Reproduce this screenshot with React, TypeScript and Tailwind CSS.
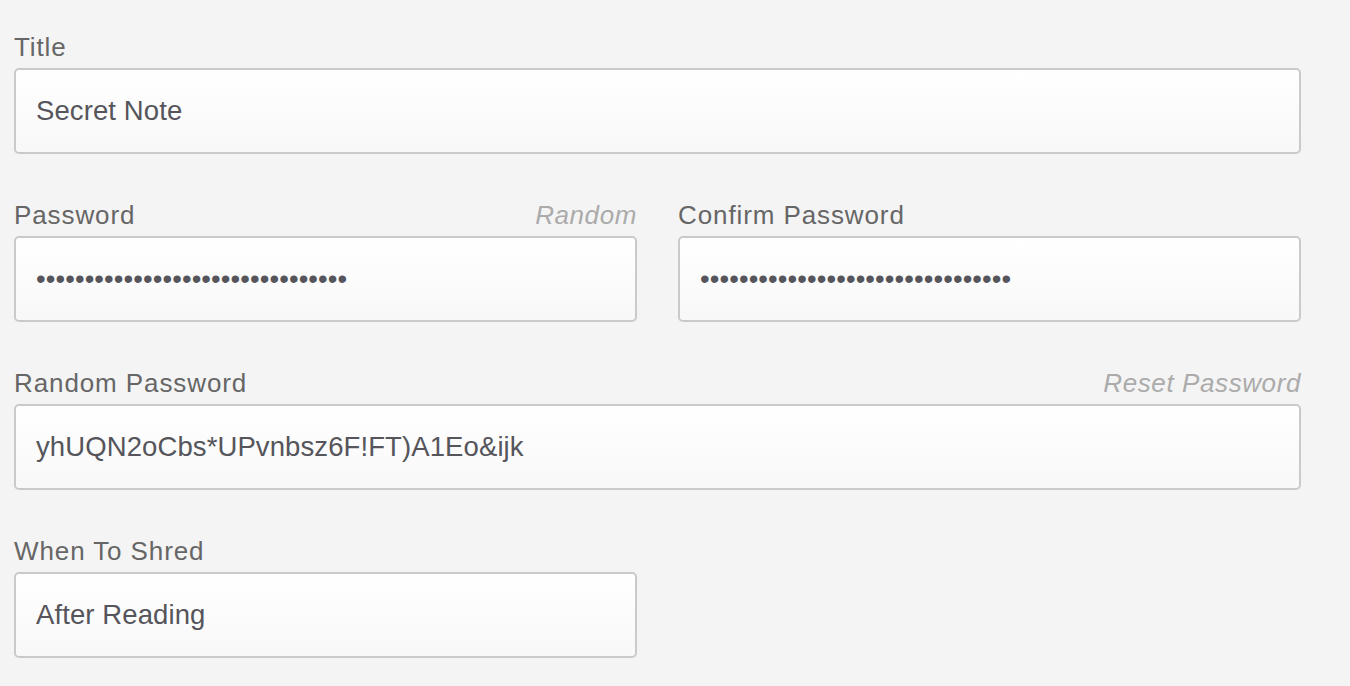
import React from 'react';

const randomPassword = 'yhUQN2oCbs*UPvnbsz6F!FT)A1Eo&ijk';

function Field({
  label,
  action,
  value,
  type = 'text',
}: {
  label: string;
  action?: string;
  value: string;
  type?: string;
}) {
  return (
    <div className="flex flex-col">
      <div className="flex h-[30px] items-center justify-between mb-[6px]">
        <span className="text-[26px] leading-[30px] text-[#666666] tracking-[0.9px]">{label}</span>
        {action && (
          <span className="text-[26px] leading-[30px] italic text-[#ababab] tracking-[0.6px] cursor-pointer">
            {action}
          </span>
        )}
      </div>
      <input
        readOnly
        type={type}
        value={value}
        className="h-[86px] w-full rounded-[5px] border-2 border-[#cacaca] bg-linear-to-b from-white to-[#f8f8f8] pl-[20px] pr-4 text-[27.5px] text-[#55555b] tracking-[0.1px] outline-none"
      />
    </div>
  );
}

export default function App() {
  return (
    <div
      className="min-h-[686px] w-[1350px] bg-[#f4f4f4] pt-[32px] pl-[14px] pr-[49px]"
      style={{ fontFamily: '"Liberation Sans", Arial, sans-serif' }}
    >
      <div className="flex flex-col gap-[46px]">
        {/* Title */}
        <Field label="Title" value="Secret Note" />

        {/* Password + confirm */}
        <div className="grid grid-cols-2 gap-[41px]">
          <Field label="Password" action="Random" type="password" value={randomPassword} />
          <Field label="Confirm Password" type="password" value={randomPassword} />
        </div>

        {/* Generated password */}
        <Field label="Random Password" action="Reset Password" value={randomPassword} />

        {/* Shred */}
        <div className="grid grid-cols-2 gap-[41px]">
          <Field label="When To Shred" value="After Reading" />
          <div />
        </div>
      </div>
    </div>
  );
}
